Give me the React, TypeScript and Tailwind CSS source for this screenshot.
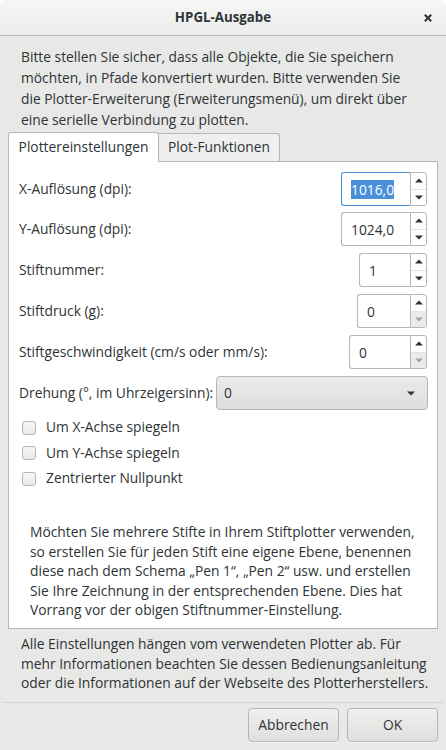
import React from "react";

function UpArrow({ disabled }: { disabled?: boolean }) {
  return (
    <svg width="8" height="5" viewBox="0 0 8 5" className="block">
      <polygon points="0,4.5 4,0.5 8,4.5" fill={disabled ? "#a4a6a6" : "#2e3436"} />
    </svg>
  );
}

function DownArrow({ disabled }: { disabled?: boolean }) {
  return (
    <svg width="8" height="5" viewBox="0 0 8 5" className="block">
      <polygon points="0,0.5 8,0.5 4,4.5" fill={disabled ? "#a4a6a6" : "#2e3436"} />
    </svg>
  );
}

type SpinProps = {
  value: string;
  entryClass: string;
  focused?: boolean;
  downDisabled?: boolean;
};

function Spin({ value, entryClass, focused, downDisabled }: SpinProps) {
  return (
    <div className="flex h-[34px]">
      <div
        className={
          "flex items-center pl-[9px] border-l border-y rounded-l-[3px] bg-white " +
          entryClass +
          (focused ? " border-[#4a90d9]" : " border-[#b6b6b3]")
        }
      >
        {focused ? (
          <span className="bg-[#4a90d9] text-white leading-[19px]">{value}</span>
        ) : (
          <span className="leading-[19px]">{value}</span>
        )}
      </div>
      <div className="flex w-[17px] flex-col border border-[#b6b6b3] rounded-r-[3px] overflow-hidden bg-white">
        <div className="flex flex-1 items-center justify-center border-b border-[#e4e4e2]">
          <UpArrow />
        </div>
        <div
          className={
            "flex flex-1 items-center justify-center " + (downDisabled ? "bg-[#ebebea]" : "bg-white")
          }
        >
          <DownArrow disabled={downDisabled} />
        </div>
      </div>
    </div>
  );
}

function Check({ label }: { label: string }) {
  return (
    <div className="flex h-[25.5px] items-center">
      <div className="ml-[13px] h-[14px] w-[14px] rounded-[3px] border border-[#b6b6b3] bg-linear-to-b from-[#f7f7f7] to-[#e9e9e8]" />
      <span className="ml-[10px]">{label}</span>
    </div>
  );
}

export default function App() {
  return (
    <div className="h-[750px] w-[446px] bg-white font-['Open_Sans',sans-serif] text-[13.8px] text-[#2e3436]">
      <div className="flex h-full flex-col overflow-hidden rounded-t-[7px] bg-[#e8e8e7]">
        {/* Title bar */}
        <div className="grid h-[36px] shrink-0 grid-cols-[1fr_auto_1fr] items-center border-b border-[#bdbdba] bg-linear-to-b from-[#f6f6f6] to-[#ededec]">
          <div />
          <div className="text-[13.3px] font-bold leading-none">HPGL-Ausgabe</div>
          <div className="flex justify-end pr-[14px]">
            <svg width="8" height="8" viewBox="0 0 8 8" className="block">
              <path d="M0.8 0.8 L7.2 7.2 M7.2 0.8 L0.8 7.2" stroke="#2e3436" strokeWidth="2" />
            </svg>
          </div>
        </div>

        {/* Intro */}
        <div className="whitespace-nowrap px-[21px] pt-[10px] leading-[21px]">
          Bitte stellen Sie sicher, dass alle Objekte, die Sie speichern
          <br />
          möchten, in Pfade konvertiert wurden. Bitte verwenden Sie
          <br />
          die Plotter-Erweiterung (Erweiterungsmenü), um direkt über
          <br />
          eine serielle Verbindung zu plotten.
        </div>

        {/* Notebook */}
        <div className="mx-[8px] mt-[2px]">
          <div className="flex h-[29px] items-end">
            <div className="relative z-10 mb-[-1px] flex h-[30px] w-[151px] items-center justify-center rounded-t-[3px] border-x border-t border-[#b6b6b3] bg-white">
              Plottereinstellungen
            </div>
            <div className="flex h-[28px] w-[121px] items-center justify-center rounded-tr-[3px] border-r border-t border-[#b6b6b3] bg-[#efefee]">
              Plot-Funktionen
            </div>
          </div>
          <div className="flex h-[468px] flex-col border border-[#b6b6b3] bg-white pt-[10px]">
            <div className="flex h-[34px] items-center justify-between px-[10px]">
              <span>X-Auflösung (dpi):</span>
              <Spin value="1016,0" entryClass="w-[69px]" focused />
            </div>
            <div className="mt-[6px] flex h-[34px] items-center justify-between px-[10px]">
              <span>Y-Auflösung (dpi):</span>
              <Spin value="1024,0" entryClass="w-[69px]" />
            </div>
            <div className="mt-[7px] flex h-[34px] items-center justify-between px-[10px]">
              <span>Stiftnummer:</span>
              <Spin value="1" entryClass="w-[51px]" />
            </div>
            <div className="mt-[7px] flex h-[34px] items-center justify-between px-[10px]">
              <span>Stiftdruck (g):</span>
              <Spin value="0" entryClass="w-[53px]" downDisabled />
            </div>
            <div className="mt-[7px] flex h-[34px] items-center justify-between px-[10px]">
              <span>Stiftgeschwindigkeit (cm/s oder mm/s):</span>
              <Spin value="0" entryClass="w-[61px]" downDisabled />
            </div>
            <div className="mt-[7px] flex h-[34px] items-center justify-between pl-[10px] pr-[9px]">
              <span>Drehung (°, im Uhrzeigersinn):</span>
              <div className="flex h-[34px] w-[212px] items-center justify-between rounded-[4px] border border-[#b6b6b3] bg-linear-to-b from-[#ebebea] to-[#dddddc] pl-[7px] pr-[12px]">
                <span>0</span>
                <DownArrow />
              </div>
            </div>
            <div className="mt-[5px] flex flex-col">
              <Check label="Um X-Achse spiegeln" />
              <Check label="Um Y-Achse spiegeln" />
              <Check label="Zentrierter Nullpunkt" />
            </div>
            <div className="mt-auto whitespace-nowrap pb-[8.5px] pl-[21px] leading-[19.5px]">
              Möchten Sie mehrere Stifte in Ihrem Stiftplotter verwenden,
              <br />
              so erstellen Sie für jeden Stift eine eigene Ebene, benennen
              <br />
              diese nach dem Schema „Pen 1“, „Pen 2“ usw. und erstellen
              <br />
              Sie Ihre Zeichnung in der entsprechenden Ebene. Dies hat
              <br />
              Vorrang vor der obigen Stiftnummer-Einstellung.
            </div>
          </div>
        </div>

        {/* Footer */}
        <div className="mt-[5px] whitespace-nowrap px-[21px] leading-[19.5px]">
          Alle Einstellungen hängen vom verwendeten Plotter ab. Für
          <br />
          mehr Informationen beachten Sie dessen Bedienungsanleitung
          <br />
          oder die Informationen auf der Webseite des Plotterherstellers.
        </div>
        <div className="mx-[2px] mt-[9.5px] h-px bg-[#d3d3d1]" />
        <div className="mt-[5px] flex justify-end gap-[8px] pr-[8px]">
          <div className="flex h-[34px] w-[91px] items-center justify-center rounded-[4px] border border-[#b6b6b3] bg-linear-to-b from-[#efefee] to-[#e0e0df] shadow-[0_1px_0_rgba(255,255,255,0.6)]">
            Abbrechen
          </div>
          <div className="flex h-[34px] w-[91px] items-center justify-center rounded-[4px] border border-[#b6b6b3] bg-linear-to-b from-[#efefee] to-[#e0e0df] shadow-[0_1px_0_rgba(255,255,255,0.6)]">
            OK
          </div>
        </div>
      </div>
    </div>
  );
}
